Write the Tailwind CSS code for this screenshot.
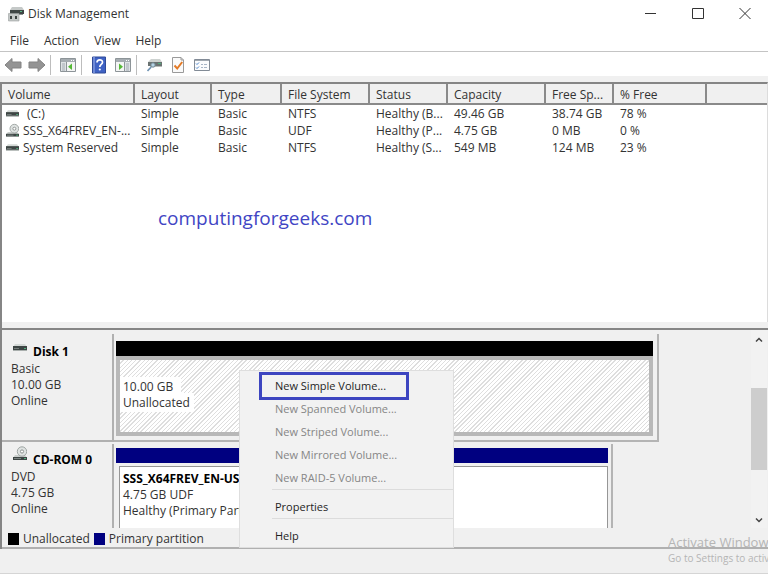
<!DOCTYPE html>
<html lang="en">
<head>
  <meta charset="UTF-8" />
  <meta name="viewport" content="width=device-width, initial-scale=1.0" />
  <title>Disk Management</title>
  <script src="https://cdn.jsdelivr.net/npm/@tailwindcss/browser@4"></script>
</head>
<body class="bg-white font-['Open_Sans','Noto_Sans',sans-serif] text-xs text-[#333]">
  <!-- Shared icons -->
  <svg class="hidden">
    <symbol id="drive" viewBox="0 0 14 8">
      <path d="M2 0h10l2 3H0z" fill="#d3d8d6" />
      <path d="M0 2h14v4H0z" fill="#3d4544" />
      <path d="M1 4h5v1H1z" fill="#757d7b" />
      <path d="M11 4h2v1h-2z" fill="#4fae7c" />
      <path d="M0 6h14v1H0z" fill="#a9afad" />
    </symbol>
    <symbol id="cdrom" viewBox="0 0 14 16">
      <path d="M2 9h10l2 3H0z" fill="#c9cecc" />
      <circle cx="9" cy="5.500" r="4.700" fill="#dfe3e2" stroke="#9fa5a3" />
      <circle cx="9" cy="5.500" r="1.600" fill="#fff" stroke="#8c9290" />
      <path d="M0 11h14v3H0z" fill="#3d4544" />
      <path d="M1 12h7v1H1z" fill="#7c8482" />
      <path d="M11 12h2v1h-2z" fill="#4fae7c" />
    </symbol>
  </svg>

  <div class="flex min-h-screen flex-col overflow-hidden">
    <!-- Title bar -->
    <header class="flex h-7 items-center pl-2">
      <svg class="mr-1 h-4 w-4" viewBox="0 0 16 16">
        <path d="M4 1h10l2 3H2z" fill="#c5c9c8" />
        <path d="M2 4h14v4H2z" fill="#3f4645" />
        <path d="M12 5h2v1h-2z" fill="#59b886" />
        <path d="M3 8h12v1H3z" fill="#8b908f" />
        <path d="M.5 7.500h10.500v7.500H.5z" fill="#c4c8c7" stroke="#9ba09f" stroke-width=".6" />
        <path d="M2 10h2v3H2zM7 10h2v3H7z" fill="#3c4241" />
      </svg>
      <h1 class="grow">Disk Management</h1>
      <button aria-label="Minimize" class="flex h-6 w-12 items-center justify-center">
        <svg class="h-3 w-3" viewBox="0 0 12 12" fill="none" stroke="#333"><path d="M1 5.500h11" /></svg>
      </button>
      <button aria-label="Maximize" class="flex h-6 w-12 items-center justify-center">
        <svg class="h-3 w-3" viewBox="0 0 12 12" fill="none" stroke="#333"><path d="M.5 .5h11v10H.5z" /></svg>
      </button>
      <button aria-label="Close" class="flex h-6 w-[46px] items-center justify-center">
        <svg class="h-3 w-3" viewBox="0 0 12 12" fill="none" stroke="#333"><path d="M.5 0l11 11M11.500 0L.5 11" /></svg>
      </button>
    </header>

    <!-- Menu bar -->
    <nav class="flex h-6 items-center gap-[15px] border-b border-[#c4c4c4] pt-0.5 pl-[10px]">
      <button>File</button>
      <button>Action</button>
      <button>View</button>
      <button>Help</button>
    </nav>

    <!-- Toolbar -->
    <div class="flex h-6 items-center bg-white pt-px pl-1">
      <button aria-label="Back" class="mr-1.5">
        <svg class="h-4 w-[18px]" viewBox="0 0 18 16"><path d="M1 8L8 1.500V5h9v6H8v3.500z" fill="#949494" stroke="#838383" stroke-linejoin="round" /></svg>
      </button>
      <button aria-label="Forward">
        <svg class="h-4 w-[18px]" viewBox="0 0 18 16"><path d="M17 8l-7-6.500V5H1v6h9v3.500z" fill="#949494" stroke="#838383" stroke-linejoin="round" /></svg>
      </button>
      <span class="ml-1 mr-2 h-5 w-px bg-[#bdbdbd]"></span>
      <button aria-label="Show console tree">
        <svg class="h-4 w-[18px]" viewBox="0 0 18 16">
          <path d="M1.500 1.500h15v13h-15z" fill="#f4f5f5" stroke="#8d9498" />
          <path d="M2 2h14v3H2z" fill="#a5acb1" />
          <path d="M12 3h1v1h-1zM14 3h1v1h-1z" fill="#fff" />
          <path d="M2 5h5v9H2z" fill="#dfe3e6" />
          <path d="M7.500 5v9" stroke="#8d9498" />
          <path d="M3 7h3M3 9h3M3 11h3M3 13h3" stroke="#a4abb2" />
          <path d="M13 6.500v6.500L9 9.700z" fill="#55b936" />
        </svg>
      </button>
      <span class="ml-1 mr-[5px] h-5 w-px bg-[#bdbdbd]"></span>
      <button aria-label="Help topics" class="ml-[5px] mr-2">
        <svg class="h-[18px] w-[14px]" viewBox="0 0 14 18">
          <path d="M.5 1h13v16H.5z" fill="#3f62c4" stroke="#2f4a98" />
          <path d="M1 1h2v16H1z" fill="#6f8ad6" />
          <path d="M5 6.500c0-3.500 5.500-3.500 5.500-.3 0 2.300-2.700 2.200-2.700 4.800" fill="none" stroke="#fff" stroke-width="1.700" />
          <circle cx="7.800" cy="13.500" r="1.100" fill="#fff" />
        </svg>
      </button>
      <button aria-label="Show action pane">
        <svg class="h-4 w-[18px]" viewBox="0 0 18 16">
          <path d="M1.500 1.500h15v13h-15z" fill="#f4f5f5" stroke="#8d9498" />
          <path d="M2 2h14v3H2z" fill="#a5acb1" />
          <path d="M12 3h1v1h-1zM14 3h1v1h-1z" fill="#fff" />
          <path d="M11 5h5v9h-5z" fill="#dfe3e6" />
          <path d="M10.500 5v9" stroke="#8d9498" />
          <path d="M12 7h3M12 9h3M12 11h3M12 13h3" stroke="#a4abb2" />
          <path d="M5 6.500v6.500l4-3.300z" fill="#55b936" />
        </svg>
      </button>
      <span class="ml-1 mr-2.5 h-5 w-px bg-[#bdbdbd]"></span>
      <button aria-label="Rescan disks" class="mr-2">
        <svg class="h-4 w-4" viewBox="0 0 16 16">
          <path d="M4 2h9l2 3H1z" fill="#cdd2d0" />
          <path d="M1 5h14v4H1z" fill="#6a7271" />
          <path d="M11 6h3v1h-3z" fill="#4fae7c" />
          <path d="M3 9h12v1H3z" fill="#b5bab8" />
          <circle cx="6" cy="8" r="2.200" fill="#b4d2e4" stroke="#71858f" />
          <path d="M4.200 10l-3.700 4" stroke="#6f93b3" stroke-width="1.700" />
        </svg>
      </button>
      <button aria-label="Properties" class="mr-2">
        <svg class="h-[18px] w-[14px]" viewBox="0 0 14 18">
          <path d="M1.500 1.500H10L12.500 4v12.500h-11z" fill="#fafafa" stroke="#9a9a9a" />
          <path d="M10 1.500V4h2.500" fill="none" stroke="#9a9a9a" />
          <path d="M3.500 9.500l2.700 3 5-6.500" fill="none" stroke="#e37a26" stroke-width="2" />
        </svg>
      </button>
      <button aria-label="List settings">
        <svg class="h-4 w-[18px]" viewBox="0 0 18 16">
          <path d="M1.500 2.500h15v11h-15z" fill="#fbfcfd" stroke="#828b96" />
          <path d="M2 3h14v1H2z" fill="#a0a8b0" />
          <path d="M3 6.500l1 1 2-2M3 10.500l1 1 2-2" fill="none" stroke="#4a83c9" />
          <path d="M8 7.500h2M11 7.500h3M8 10.500h2M11 10.500h3" stroke="#a8b6c7" />
        </svg>
      </button>
    </div>

    <!-- Volume list -->
    <main class="flex grow flex-col border-l-2 border-[#858585] bg-[#f0f0f0]">
      <div class="-ml-0.5 h-1.5 bg-[#f0f0f0]"></div>
      <section class="grow border-t-2 border-r border-t-[#858585] border-r-[#dcdcdc] bg-white">
        <table class="w-full table-fixed border-collapse text-left leading-[17px]">
          <colgroup>
            <col class="w-[132px]" /><col class="w-[77px]" /><col class="w-[70px]" /><col class="w-[88px]" /><col class="w-[78px]" /><col class="w-[98px]" /><col class="w-[68px]" /><col class="w-[93px]" /><col />
          </colgroup>
          <thead class="bg-[#f0f0f0]">
            <tr class="h-5 border-b-2 border-[#8a8a8a] *:overflow-hidden *:border-r-2 *:border-[#8a8a8a] *:p-0 *:pt-0.5 *:pl-1.5 *:font-normal *:whitespace-nowrap *:last:border-r-0">
              <th>Volume</th><th>Layout</th><th>Type</th><th>File System</th><th>Status</th><th>Capacity</th><th>Free Sp...</th><th>% Free</th><td></td>
            </tr>
          </thead>
          <tbody class="[&_td]:overflow-hidden [&_td]:p-0 [&_td]:pl-[7px] [&_td]:whitespace-nowrap">
            <tr>
              <td><div class="-ml-[3px] flex items-center gap-1"><svg class="h-2 w-[13px] shrink-0"><use href="#drive" /></svg><span class="pl-1">(C:)</span></div></td>
              <td>Simple</td><td>Basic</td><td>NTFS</td><td>Healthy (B...</td><td>49.46 GB</td><td>38.74 GB</td><td>78 %</td><td></td>
            </tr>
            <tr>
              <td><div class="-ml-[3px] flex items-center gap-1"><svg class="h-4 w-[13px] shrink-0"><use href="#cdrom" /></svg>SSS_X64FREV_EN-...</div></td>
              <td>Simple</td><td>Basic</td><td>UDF</td><td>Healthy (P...</td><td>4.75 GB</td><td>0 MB</td><td>0 %</td><td></td>
            </tr>
            <tr>
              <td><div class="-ml-[3px] flex items-center gap-1"><svg class="h-2 w-[13px] shrink-0"><use href="#drive" /></svg>System Reserved</div></td>
              <td>Simple</td><td>Basic</td><td>NTFS</td><td>Healthy (S...</td><td>549 MB</td><td>124 MB</td><td>23 %</td><td></td>
            </tr>
          </tbody>
        </table>
        <p class="mt-12 pl-[156px] text-[19px] leading-7 text-[#4145c4]">computingforgeeks.com</p>
      </section>

      <!-- Splitter -->
      <div class="h-2 border-b-2 border-[#858585] bg-[#f0f0f0]"></div>

      <!-- Disk map -->
      <section class="relative leading-4">
        <div class="flex h-[198px] overflow-hidden">
          <div class="grow pt-1">
            <div class="flex h-[108px]">
              <div class="w-28 shrink-0 border-r-2 border-b-2 border-[#b0b0b0] pt-2.5 pl-[9px]">
                <h2 class="mb-px flex gap-1.5 pl-0.5 font-bold text-black"><svg class="h-2 w-[14px]"><use href="#drive" /></svg>Disk 1</h2>
                <p>Basic</p>
                <p>10.00 GB</p>
                <p>Online</p>
              </div>
              <div class="mr-[92px] grow border-r-2 border-b-2 border-[#b4b4b4] pt-[7px] pr-1 pb-1 pl-0.5">
                <div class="h-[15px] bg-black"></div>
                <div class="h-[80px] border-4 border-[#b8b8b8] bg-[repeating-linear-gradient(135deg,#fff_0px,#fff_2px,#dedede_2px,#dedede_3px)] pt-[19px]">
                  <p><span class="bg-white py-px pr-2 pl-[3px]">10.00 GB</span></p>
                  <p><span class="bg-white py-px pr-1 pl-[3px]">Unallocated</span></p>
                </div>
              </div>
            </div>
            <div class="flex h-[108px] pt-0.5">
              <div class="w-28 shrink-0 border-r-2 border-[#b0b0b0] pt-2 pl-[9px]">
                <h2 class="mb-px flex gap-1.5 pl-0.5 font-bold text-black"><svg class="-mt-1.5 h-4 w-[14px]"><use href="#cdrom" /></svg>CD-ROM 0</h2>
                <p>DVD</p>
                <p>4.75 GB</p>
                <p>Online</p>
              </div>
              <div class="mr-[138px] grow border-r-2 border-[#b4b4b4] pt-1 pr-[3px] pl-0.5">
                <div class="h-[15px] bg-[#000080]"></div>
                <div class="mt-[3px] ml-[3px] h-full border border-[#969696] bg-white pt-1 pl-[3px]">
                  <p class="font-bold text-black">SSS_X64FREV_EN-US_DV9</p>
                  <p>4.75 GB UDF</p>
                  <p>Healthy (Primary Partition)</p>
                </div>
              </div>
            </div>
          </div>
          <!-- Scrollbar -->
          <div class="mr-px flex w-4 flex-col items-center bg-[#f2f2f2] pt-1.5 pb-1">
            <svg class="h-2 w-2" viewBox="0 0 8 8" fill="none" stroke="#444" stroke-width="1.500"><path d="M1 5.500l3-3 3 3" /></svg>
            <div class="mt-11 h-[82px] w-full bg-[#cdcdcd]"></div>
            <svg class="mt-auto h-2 w-2" viewBox="0 0 8 8" fill="none" stroke="#444" stroke-width="1.500"><path d="M1 2.500l3 3 3-3" /></svg>
          </div>
        </div>

        <!-- Legend -->
        <div class="flex h-[21px] items-center gap-1 border-b-2 border-[#b0b0b0] pt-0.5 pl-1.5">
          <span class="h-3 w-[11px] bg-black"></span><span>Unallocated</span>
          <span class="h-3 w-[11px] bg-[#000080]"></span><span>Primary partition</span>
        </div>

        <!-- Context menu -->
        <div role="menu" class="absolute top-10 left-[237px] flex w-[215px] flex-col border border-[#dedede] bg-[#f2f2f2] pt-[3px] text-[11px] text-[#1f1f1f] *:[button]:h-[23px] *:[button]:pl-[35px] *:[button]:text-left">
          <button role="menuitem" class="relative">New Simple Volume...<span class="absolute -top-0.5 left-[19px] h-7 w-[150px] border-3 border-[#3d45c0]"></span></button>
          <button role="menuitem" disabled class="text-[#868686]">New Spanned Volume...</button>
          <button role="menuitem" disabled class="text-[#868686]">New Striped Volume...</button>
          <button role="menuitem" disabled class="text-[#868686]">New Mirrored Volume...</button>
          <button role="menuitem" disabled class="text-[#868686]">New RAID-5 Volume...</button>
          <hr class="mb-[5px] ml-8 border-[#dcdcdc]" />
          <button role="menuitem">Properties</button>
          <hr class="mb-[5px] ml-8 border-[#dcdcdc]" />
          <button role="menuitem">Help</button>
        </div>

        <!-- Activation notice -->
        <div class="absolute top-[204px] right-0 w-[100px] overflow-hidden whitespace-nowrap text-[#b5b5b5]">
          <p class="text-[13px] leading-4">Activate Windows</p>
          <p class="text-[10px] leading-4">Go to Settings to activate Windows.</p>
        </div>
      </section>
    </main>

    <!-- Status bar -->
    <footer class="h-[25px] border-b border-[#d5d5d5] bg-[#f0f0f0]"></footer>
  </div>
</body>
</html>
